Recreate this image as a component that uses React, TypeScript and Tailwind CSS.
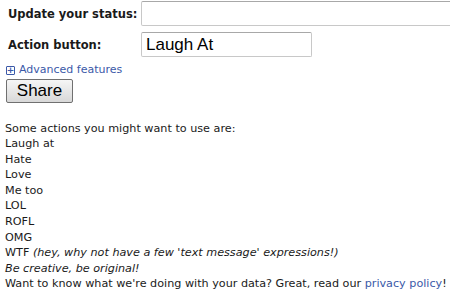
export default function App() {
  const actions = ["Laugh at", "Hate", "Love", "Me too", "LOL", "ROFL", "OMG"];

  return (
    <div className="w-[450px] h-[291px] overflow-hidden bg-white text-[#1a1a1a] font-['DejaVu_Sans',sans-serif] text-[11px]">
      <div className="flex items-center pt-[1px] pl-[8px]">
        <label className="w-[133px] shrink-0 pt-[2px] font-bold text-[11.5px]">Update your status:</label>
        <input className="w-[330px] shrink-0 h-[25px] border border-[#c8c8c8] border-t-[#a8a8a8] rounded-[2px] bg-white outline-none" />
      </div>
      <div className="flex items-center mt-[6px] pl-[8px]">
        <label className="w-[133px] shrink-0 pt-[2px] font-bold text-[11.5px]">Action button:</label>
        <input
          defaultValue="Laugh At"
          className="w-[171px] h-[25px] border border-[#c8c8c8] border-t-[#a8a8a8] rounded-[2px] bg-white px-[4px] text-[17px] text-black font-['Liberation_Sans',Arial,sans-serif] outline-none"
        />
      </div>
      <div className="flex items-center gap-[4px] mt-[5px] pl-[6px] text-[#3b59a8]">
        <span className="w-[9px] h-[9px] border border-[#3b59a8] rounded-[1px] flex items-center justify-center text-[9px] leading-none font-bold">+</span>
        <a href="#" className="text-[11px]">Advanced features</a>
      </div>
      <button className="ml-[6px] w-[67px] h-[24px] border border-[#707070] rounded-[2px] bg-gradient-to-b from-[#f6f6f6] to-[#d8d8d8] text-[17px] text-black font-['Liberation_Sans',Arial,sans-serif] leading-none">
        Share
      </button>
      <div className="mt-[18px] pl-[5px] text-[11.2px] leading-[15.6px]">
        <div>Some actions you might want to use are:</div>
        {actions.map((a) => (
          <div key={a}>{a}</div>
        ))}
        <div>
          WTF <i>(hey, why not have a few 'text message' expressions!)</i>
        </div>
        <div>
          <i>Be creative, be original!</i>
        </div>
        <div className="whitespace-nowrap">
          Want to know what we're doing with your data? Great, read our{" "}
          <a href="#" className="text-[#3b59a8]">privacy policy</a>!
        </div>
      </div>
    </div>
  );
}
